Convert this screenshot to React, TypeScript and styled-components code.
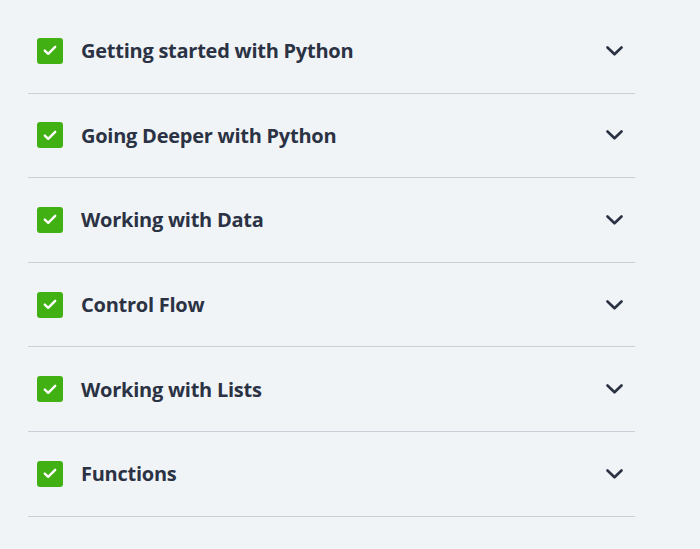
import React from "react";
import styled, { createGlobalStyle } from "styled-components";

const Global = createGlobalStyle`
  html, body { margin: 0; padding: 0; background: #f1f4f7; }
  body { font-family: "Fira Sans", "Open Sans", "Noto Sans", sans-serif; }
`;

const Page = styled.div`
  min-height: 549px;
  background: #f1f4f7;
  padding: 9px 0 0 28px;
  box-sizing: border-box;
`;

const List = styled.ul`
  list-style: none;
  margin: 0;
  padding: 0;
  width: 607px;
`;

const Row = styled.li`
  box-sizing: border-box;
  height: 84.6px;
  border-bottom: 1px solid #c9d0d8;
  display: flex;
  align-items: center;
  padding: 0 12px 0 9px;
`;

const Check = styled.span`
  width: 26px;
  height: 26px;
  border-radius: 3px;
  background: #40b012;
  display: flex;
  align-items: center;
  justify-content: center;
  flex: none;
`;

const Title = styled.span`
  margin-left: 18px;
  flex: 1;
  font-family: "Open Sans", sans-serif;
  font-weight: 700;
  font-size: 20px;
  letter-spacing: -0.25px;
  color: #2b3244;
`;

const Chevron = styled.svg`
  width: 17px;
  height: 10px;
  flex: none;
`;

const items = [
  "Getting started with Python",
  "Going Deeper with Python",
  "Working with Data",
  "Control Flow",
  "Working with Lists",
  "Functions",
];

export default function App() {
  return (
    <Page>
      <Global />
      <List>
        {items.map((t) => (
          <Row key={t}>
            <Check>
              <svg width="14" height="11" viewBox="0 0 14 11">
                <path d="M1.8 5.6 L5.2 8.8 L12.2 1.8" fill="none" stroke="#fff" strokeWidth="2.4" strokeLinecap="round" strokeLinejoin="round" />
              </svg>
            </Check>
            <Title>{t}</Title>
            <Chevron viewBox="0 0 17 10">
              <path d="M1.5 1.5 L8.5 8.3 L15.5 1.5" fill="none" stroke="#2b3244" strokeWidth="2.6" strokeLinecap="round" strokeLinejoin="round" />
            </Chevron>
          </Row>
        ))}
      </List>
    </Page>
  );
}
